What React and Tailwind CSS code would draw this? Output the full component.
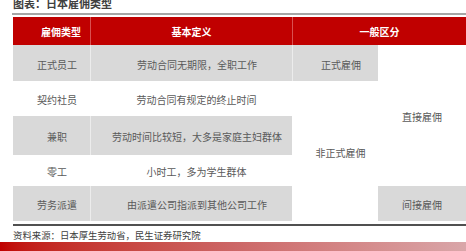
const font = { fontFamily: '"Noto Sans CJK SC", "Noto Sans", sans-serif' };

const gray = 'bg-[#d9d9d9]';

function Cell({ className = '', children }) {
  return (
    <div className={`flex items-center justify-center pt-[2px] text-[10px] text-[#595959] ${className}`}>
      {children}
    </div>
  );
}

export default function App() {
  return (
    <div className="relative w-[466px] h-[251px] overflow-hidden bg-white" style={font}>
      {/* Title */}
      <div className="pl-[13px] -mt-[6px] h-[19px] text-[11px] leading-[19px] font-bold text-[#404040]">
        图表：日本雇佣类型
      </div>
      <div className="ml-[12px] h-[2px] bg-[#a6a6a6]" />

      {/* Table */}
      <div className="ml-[13px] mt-[2px] grid grid-cols-[77px_202px_86px_88px] grid-rows-[28px_36px_35px_39px_31px_35px]">
        <div className="col-start-1 row-start-1 flex items-center justify-center pl-[19px] bg-[#c00000] text-white text-[10px] font-bold">
          雇佣类型
        </div>
        <div className="col-start-2 row-start-1 flex items-center justify-center bg-[#c00000] border-l border-[#d95050] text-white text-[10px] font-bold">
          基本定义
        </div>
        <div className="col-start-3 col-span-2 row-start-1 flex items-center justify-center bg-[#c00000] border-l border-[#d95050] text-white text-[10px] font-bold">
          一般区分
        </div>

        <Cell className={`col-start-1 row-start-2 pl-[11px] ${gray}`}>正式员工</Cell>
        <Cell className={`col-start-2 row-start-2 pl-[11px] border-l border-[#ececec] ${gray}`}>劳动合同无期限，全职工作</Cell>
        <Cell className={`col-start-3 row-start-2 pl-[11px] border-l border-[#ececec] ${gray}`}>正式雇佣</Cell>
        <Cell className="col-start-4 row-start-2 row-span-4">直接雇佣</Cell>

        <Cell className="col-start-1 row-start-3 pl-[11px]">契约社员</Cell>
        <Cell className="col-start-2 row-start-3 pl-[11px]">劳动合同有规定的终止时间</Cell>
        <Cell className="col-start-3 row-start-3 row-span-4 pl-[11px]">非正式雇佣</Cell>

        <Cell className={`col-start-1 row-start-4 pl-[11px] ${gray}`}>兼职</Cell>
        <Cell className={`col-start-2 row-start-4 pl-[11px] border-l border-[#ececec] ${gray}`}>劳动时间比较短，大多是家庭主妇群体</Cell>

        <Cell className="col-start-1 row-start-5 pl-[11px]">零工</Cell>
        <Cell className="col-start-2 row-start-5 pl-[11px]">小时工，多为学生群体</Cell>

        <Cell className={`col-start-1 row-start-6 pl-[11px] ${gray}`}>劳务派遣</Cell>
        <Cell className={`col-start-2 row-start-6 pl-[11px] border-l border-[#ececec] ${gray}`}>由派遣公司指派到其他公司工作</Cell>
        <Cell className={`col-start-4 row-start-6 ${gray}`}>间接雇佣</Cell>
      </div>

      <div className="ml-[13px] mt-[3px] h-[1.5px] bg-[#505050]" />

      {/* Source */}
      <div className="pl-[13px] mt-[1px] h-[16px] leading-[16px] text-[9.4px] text-[#404040]">
        资料来源：日本厚生劳动省，民生证券研究院
      </div>

      <div className="absolute left-0 right-0 top-[242px] h-[9px] bg-gradient-to-r from-[#c00000] via-[#cc6666] to-[#d9a6a9]" />
    </div>
  );
}
